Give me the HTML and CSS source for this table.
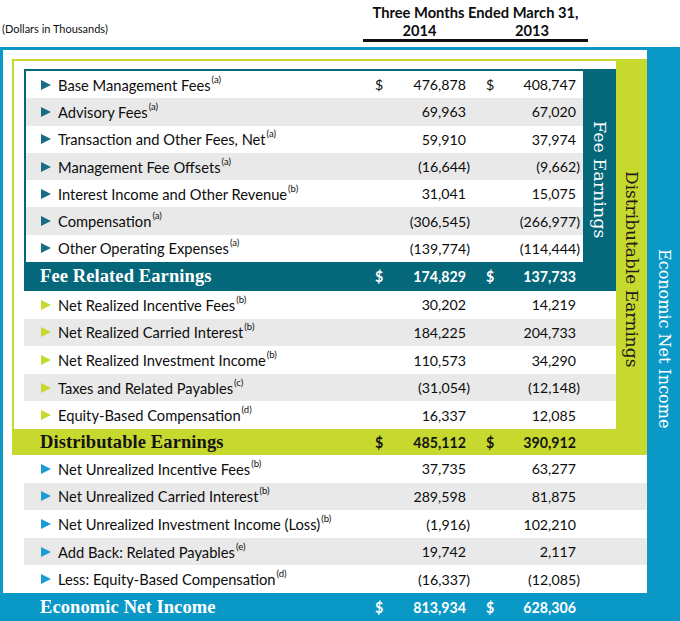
FILE: index.html
```html
<!DOCTYPE html>
<html lang="en">
<head>
<meta charset="utf-8">
<title>Earnings Summary</title>
<link rel="stylesheet" href="styles.css">
</head>
<body>
<div class="page">
  <header class="top">
    <div class="units">(Dollars in Thousands)</div>
    <div class="period">
      <div class="period-title">Three Months Ended March 31,</div>
      <div class="years"><span>2014</span><span>2013</span></div>
    </div>
  </header>

  <section class="eni">
    <div class="eni-main">
      <div class="de-box">
        <div class="de-grid">
          <div class="de-main">
            <div class="fre-box">
              <div class="fre-grid">
                <div class="fre-rows">
                  <div class="row">
                    <div class="label"><span class="tri"></span>Base Management Fees<sup>(a)</sup></div>
                    <div class="amt"><span class="cur">$</span><span class="num">476,878</span></div>
                    <div class="amt amt2"><span class="cur">$</span><span class="num">408,747</span></div>
                  </div>
                  <div class="row alt">
                    <div class="label"><span class="tri"></span>Advisory Fees<sup>(a)</sup></div>
                    <div class="amt"><span class="cur"></span><span class="num">69,963</span></div>
                    <div class="amt amt2"><span class="cur"></span><span class="num">67,020</span></div>
                  </div>
                  <div class="row">
                    <div class="label"><span class="tri"></span>Transaction and Other Fees, Net<sup>(a)</sup></div>
                    <div class="amt"><span class="cur"></span><span class="num">59,910</span></div>
                    <div class="amt amt2"><span class="cur"></span><span class="num">37,974</span></div>
                  </div>
                  <div class="row alt">
                    <div class="label"><span class="tri"></span>Management Fee Offsets<sup>(a)</sup></div>
                    <div class="amt"><span class="cur"></span><span class="num">(16,644<span class="cp">)</span></span></div>
                    <div class="amt amt2"><span class="cur"></span><span class="num">(9,662<span class="cp">)</span></span></div>
                  </div>
                  <div class="row">
                    <div class="label"><span class="tri"></span>Interest Income and Other Revenue<sup>(b)</sup></div>
                    <div class="amt"><span class="cur"></span><span class="num">31,041</span></div>
                    <div class="amt amt2"><span class="cur"></span><span class="num">15,075</span></div>
                  </div>
                  <div class="row alt">
                    <div class="label"><span class="tri"></span>Compensation<sup>(a)</sup></div>
                    <div class="amt"><span class="cur"></span><span class="num">(306,545<span class="cp">)</span></span></div>
                    <div class="amt amt2"><span class="cur"></span><span class="num">(266,977<span class="cp">)</span></span></div>
                  </div>
                  <div class="row">
                    <div class="label"><span class="tri"></span>Other Operating Expenses<sup>(a)</sup></div>
                    <div class="amt"><span class="cur"></span><span class="num">(139,774<span class="cp">)</span></span></div>
                    <div class="amt amt2"><span class="cur"></span><span class="num">(114,444<span class="cp">)</span></span></div>
                  </div>
                </div>
                <div class="side side-fre"><span>Fee Earnings</span></div>
              </div>
              <div class="row total total-fre">
                <div class="label">Fee Related Earnings</div>
                <div class="amt"><span class="cur">$</span><span class="num">174,829</span></div>
                <div class="amt amt2"><span class="cur">$</span><span class="num">137,733</span></div>
              </div>
            </div>

            <div class="de-rows">
              <div class="row">
                <div class="label"><span class="tri"></span>Net Realized Incentive Fees<sup>(b)</sup></div>
                <div class="amt"><span class="cur"></span><span class="num">30,202</span></div>
                <div class="amt amt2"><span class="cur"></span><span class="num">14,219</span></div>
              </div>
              <div class="row alt">
                <div class="label"><span class="tri"></span>Net Realized Carried Interest<sup>(b)</sup></div>
                <div class="amt"><span class="cur"></span><span class="num">184,225</span></div>
                <div class="amt amt2"><span class="cur"></span><span class="num">204,733</span></div>
              </div>
              <div class="row">
                <div class="label"><span class="tri"></span>Net Realized Investment Income<sup>(b)</sup></div>
                <div class="amt"><span class="cur"></span><span class="num">110,573</span></div>
                <div class="amt amt2"><span class="cur"></span><span class="num">34,290</span></div>
              </div>
              <div class="row alt">
                <div class="label"><span class="tri"></span>Taxes and Related Payables<sup>(c)</sup></div>
                <div class="amt"><span class="cur"></span><span class="num">(31,054<span class="cp">)</span></span></div>
                <div class="amt amt2"><span class="cur"></span><span class="num">(12,148<span class="cp">)</span></span></div>
              </div>
              <div class="row">
                <div class="label"><span class="tri"></span>Equity-Based Compensation<sup>(d)</sup></div>
                <div class="amt"><span class="cur"></span><span class="num">16,337</span></div>
                <div class="amt amt2"><span class="cur"></span><span class="num">12,085</span></div>
              </div>
            </div>
          </div>
          <div class="side side-de"><span>Distributable Earnings</span></div>
        </div>
        <div class="row total total-de">
          <div class="label">Distributable Earnings</div>
          <div class="amt"><span class="cur">$</span><span class="num">485,112</span></div>
          <div class="amt amt2"><span class="cur">$</span><span class="num">390,912</span></div>
        </div>
      </div>

      <div class="eni-rows">
        <div class="row">
          <div class="label"><span class="tri"></span>Net Unrealized Incentive Fees<sup>(b)</sup></div>
          <div class="amt"><span class="cur"></span><span class="num">37,735</span></div>
          <div class="amt amt2"><span class="cur"></span><span class="num">63,277</span></div>
        </div>
        <div class="row alt">
          <div class="label"><span class="tri"></span>Net Unrealized Carried Interest<sup>(b)</sup></div>
          <div class="amt"><span class="cur"></span><span class="num">289,598</span></div>
          <div class="amt amt2"><span class="cur"></span><span class="num">81,875</span></div>
        </div>
        <div class="row">
          <div class="label"><span class="tri"></span>Net Unrealized Investment Income (Loss)<sup>(b)</sup></div>
          <div class="amt"><span class="cur"></span><span class="num">(1,916<span class="cp">)</span></span></div>
          <div class="amt amt2"><span class="cur"></span><span class="num">102,210</span></div>
        </div>
        <div class="row alt">
          <div class="label"><span class="tri"></span>Add Back: Related Payables<sup>(e)</sup></div>
          <div class="amt"><span class="cur"></span><span class="num">19,742</span></div>
          <div class="amt amt2"><span class="cur"></span><span class="num">2,117</span></div>
        </div>
        <div class="row">
          <div class="label"><span class="tri"></span>Less: Equity-Based Compensation<sup>(d)</sup></div>
          <div class="amt"><span class="cur"></span><span class="num">(16,337<span class="cp">)</span></span></div>
          <div class="amt amt2"><span class="cur"></span><span class="num">(12,085<span class="cp">)</span></span></div>
        </div>
      </div>

      <div class="row total total-eni">
        <div class="label">Economic Net Income</div>
        <div class="amt"><span class="cur">$</span><span class="num">813,934</span></div>
        <div class="amt amt2"><span class="cur">$</span><span class="num">628,306</span></div>
      </div>
    </div>
    <div class="side side-eni"><span>Economic Net Income</span></div>
  </section>
</div>
</body>
</html>
```

FILE: styles.css
```css
* { box-sizing: border-box; }

html, body {
  margin: 0;
  padding: 0;
  background: #ffffff;
}

body {
  font-family: Lato, "Open Sans", "Liberation Sans", sans-serif;
  color: #0d0d0d;
}

.page {
  width: 680px;
  height: 621px;
  overflow: hidden;
}

/* ---------- header ---------- */
.top {
  height: 47px;
  display: flex;
  align-items: flex-start;
}

.units {
  font-size: 11px;
  padding: 22px 0 0 2px;
  color: #111;
}

.period {
  margin-left: auto;
  margin-right: 92px;
  width: 225px;
  padding-top: 3px;
  font-weight: 700;
  font-size: 14.7px;
  color: #0d0d0d;
}

.period-title {
  text-align: center;
  line-height: 18px;
}

.years {
  display: grid;
  grid-template-columns: 113px 112px;
  text-align: center;
  line-height: 18px;
  border-bottom: 3px solid #111;
}

/* ---------- frames ---------- */
.eni {
  display: grid;
  grid-template-columns: 1fr 33px;
  background: #0a99c7;
  padding: 3px 0 0 3px;
}

.eni-main {
  background: #ffffff;
  padding-top: 9px;
}

.de-box {
  margin-left: 9px;
  border-top: 2px solid #c7d82e;
  border-left: 2px solid #c7d82e;
  background: #ffffff;
}

.de-grid {
  display: grid;
  grid-template-columns: 1fr 31px;
}

.de-main {
  padding: 8px 0 0 10px;
}

.fre-box {
  border-top: 2px solid #05677a;
  border-left: 2px solid #05677a;
}

.fre-grid {
  display: grid;
  grid-template-columns: 1fr 33px;
}

.eni-rows {
  margin-left: 21px;
}

/* ---------- side labels ---------- */
.side {
  display: flex;
  justify-content: center;
  font-family: "DejaVu Serif", "Liberation Serif", serif;
  font-size: 17px;
  line-height: 20px;
}

.side span {
  writing-mode: vertical-rl;
  white-space: nowrap;
}

.side-fre {
  background: #05677a;
  color: #ffffff;
  padding-top: 50px;
  font-size: 17.5px;
}

.side-de {
  background: #c7d82e;
  color: #1c1c1c;
  padding-top: 110px;
}

.side-eni {
  background: #0a99c7;
  color: #ffffff;
  padding-top: 199px;
  font-size: 16px;
}

/* ---------- rows ---------- */
.row {
  display: grid;
  grid-template-columns: 1fr 91px 110px;
  align-items: center;
  height: 27.6px;
  padding-left: 17px;
  padding-right: 40px;
  font-size: 14.7px;
  background: #ffffff;
}

.row.alt {
  background: #e9e9e9;
}

.fre-rows .row {
  height: 27.3px;
  padding-left: 15px;
  padding-right: 7px;
}

.eni-rows .row {
  padding-right: 71px;
}

.label {
  display: flex;
  align-items: center;
  white-space: nowrap;
}

.tri {
  width: 0;
  height: 0;
  border-left: 10px solid #c7d82e;
  border-top: 5.5px solid transparent;
  border-bottom: 5.5px solid transparent;
  margin-right: 7px;
}

.fre-rows .tri {
  border-left-color: #176e84;
}

.eni-rows .tri {
  border-left-color: #1a9cd4;
}

sup {
  font-size: 9.5px;
  line-height: 0;
  vertical-align: 0;
  position: relative;
  top: -5px;
  margin-left: 1px;
}

.amt {
  display: flex;
  justify-content: space-between;
  white-space: nowrap;
  font-size: 14.2px;
}

.amt2 {
  padding-left: 20px;
}

.cp {
  margin-right: -4px;
}

/* ---------- totals ---------- */
.total {
  color: #ffffff;
}

.total .label {
  font-family: "Liberation Serif", "Times New Roman", serif;
  font-weight: 700;
  font-size: 18.5px;
  letter-spacing: 0.1px;
}

.total .amt {
  font-weight: 700;
}

.total-fre {
  height: 29px;
  padding-left: 14px;
  padding-right: 40px;
  background: #05677a;
}

.total-de {
  height: 26px;
  padding-left: 26px;
  padding-right: 71px;
  background: #c7d82e;
  color: #141414;
}

.total-eni {
  height: 28px;
  padding-left: 37px;
  padding-right: 71px;
  background: #0a99c7;
}
```
